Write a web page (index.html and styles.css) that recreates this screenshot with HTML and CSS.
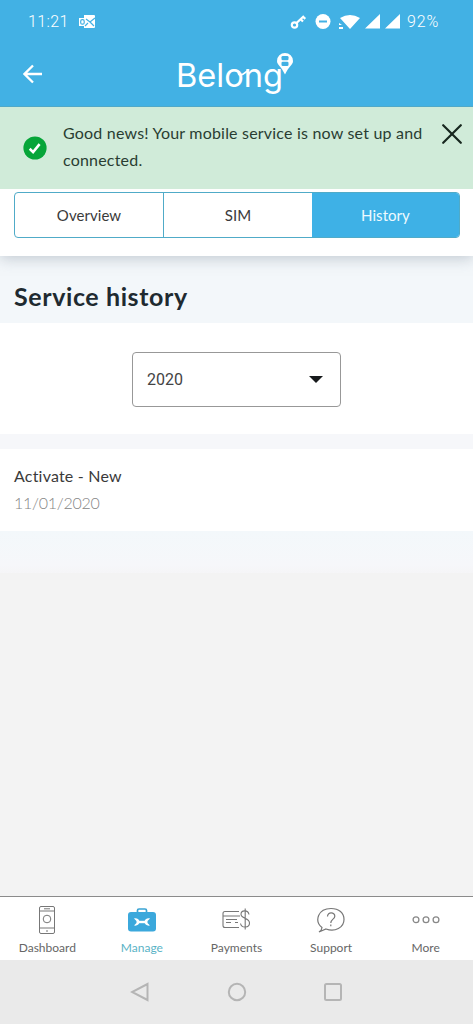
FILE: index.html
```html
<!DOCTYPE html>
<html lang="en">
<head>
<meta charset="utf-8">
<meta name="viewport" content="width=device-width, initial-scale=1">
<title>Service history</title>
<link rel="stylesheet" href="styles.css">
</head>
<body>
<div class="screen">
  <header class="top">
    <div class="status">
      <span class="clock">11:21</span>
      <svg class="mail" width="18" height="14" viewBox="0 0 18 14"><path fill="#fff" d="M6 0h10q1 0 1 1v11q0 1-1 1H6v-2H1V3h5z"/><path d="M8 4l4 3 5-4M12 7l4 4M7 11l3-3" fill="none" stroke="#42b1e4" stroke-width="1.2"/><rect x="2.700" y="4.700" width="3.500" height="4.500" rx="1.500" fill="none" stroke="#42b1e4" stroke-width="1.200"/></svg>
      <svg class="indicators" width="112" height="18" viewBox="0 0 112 18">
        <g fill="none" stroke="#fff" stroke-width="2.200"><circle cx="4.500" cy="12" r="2.700"/><path d="M6.500 10L14 3M10.500 6l2.500 2.500M13 3.700l2.300 2.200"/></g>
        <circle cx="33" cy="8.500" r="7.500" fill="#fff"/><path d="M29 8.500h8" stroke="#42b1e4" stroke-width="2"/>
        <path fill="#fff" d="M50 5Q60-1 70 5L60 16zM49 10l3 2h-3zM49 14h4v2h-4zM75 15.500L90 1v14.500zM95 15.500L110 1v14.500z"/>
      </svg>
      <span class="battery">92%</span>
    </div>
    <div class="brandbar">
      <svg class="back" width="20" height="20" viewBox="0 0 20 20"><path d="M19 10H2M10 1.500L1.500 10l8.500 8.500" fill="none" stroke="#fff" stroke-width="2.300"/></svg>
      <svg class="logo" width="120" height="48" viewBox="0 0 120 48">
        <text class="wordmark" x="-2" y="37" textLength="107" lengthAdjust="spacingAndGlyphs">Belong</text>
        <path d="M61 21q-1.500 4 1.500 4c3 0 5-3 8-5" fill="none" stroke="#fff" stroke-width="1.800"/>
        <path fill="#fff" d="M107 3a8 8 0 0 1 8 8c0 4-4 5-8 13.500-4-8.500-8-9.500-8-13.500a8 8 0 0 1 8-8z"/>
        <rect x="103.500" y="6" width="7" height="4.200" rx="1.300" fill="#42b1e4"/><rect x="103.500" y="11.800" width="7" height="4.200" rx="1.300" fill="#42b1e4"/>
      </svg>
    </div>
  </header>

  <section class="notice">
    <svg class="tick" width="24" height="24" viewBox="0 0 24 24"><circle cx="12" cy="12" r="11.600" fill="#06a539"/><path d="M6.700 12.800l3.400 3.300 6.500-7.900" fill="none" stroke="#fff" stroke-width="2.600"/></svg>
    <p class="message"><span class="line-one">Good news! Your mobile service is now set up and</span><br>connected.</p>
    <svg class="close" width="20" height="20" viewBox="0 0 20 20"><path d="M1.200 1.200l17.600 17.600M18.800 1.200L1.200 18.800" stroke="#17271f" stroke-width="2.200" stroke-linecap="round"/></svg>
  </section>

  <nav class="tabs">
    <div class="segments">
      <span class="segment">Overview</span>
      <span class="segment sim">SIM</span>
      <span class="segment selected">History</span>
    </div>
  </nav>

  <main class="content">
    <h1 class="title">Service history</h1>
    <div class="filter">
      <div class="select"><span>2020</span><svg width="14" height="7" viewBox="0 0 14 7"><path d="M0 0h14L7 7z" fill="#171a1c"/></svg></div>
    </div>
    <article class="entry">
      <div class="entry-name">Activate - New</div>
      <div class="entry-date">11/01/2020</div>
    </article>
    <div class="tail"></div>
  </main>

  <nav class="bottom">
    <div class="item"><svg class="icon" width="30" height="30" viewBox="0 0 30 30"><g fill="none" stroke="#777" stroke-width="1"><rect x="7.500" y="1.500" width="15" height="27" rx="1.500"/><path d="M7.500 6h15M7.500 23h15M12 3.800h6M15 25v2"/><circle cx="15" cy="14" r="3.800"/></g></svg><span class="label">Dashboard</span></div>
    <div class="item active"><svg class="icon" width="30" height="30" viewBox="0 0 30 30"><path d="M10.500 7V5.500q0-1.500 1.500-1.500h6q1.500 0 1.500 1.500V7" fill="none" stroke="#3aa4d4" stroke-width="1.700"/><rect x="1" y="7" width="28" height="19.500" rx="3" fill="#3ba8dc"/><path d="M10 17h10" stroke="#fff" stroke-width="2.400"/><path d="M7 13.500c3-.7 5.500 1.300 5.500 3.500s-2.500 4.200-5.500 3.500l2.500-2.500v-2zM23 13.500c-3-.7-5.500 1.300-5.500 3.500s2.500 4.200 5.500 3.500l-2.500-2.500v-2z" fill="#fff"/></svg><span class="label">Manage</span></div>
    <div class="item"><svg class="icon" width="30" height="30" viewBox="0 0 30 30"><g fill="none" stroke="#777" stroke-width="1.100"><path d="M18 6.500H4Q2 6.500 2 8.500v12q0 2 2 2h14M2 11h17M5 14.500h11M5 17.500h5M14 17.500h3M28 9.500c-1-5-8-4.500-8-.2 0 4.700 8.500 3 8.500 8.700 0 5-8 5.500-9 .5M24.200 3.500v21"/></g></svg><span class="label">Payments</span></div>
    <div class="item"><svg class="icon" width="30" height="30" viewBox="0 0 30 30"><g fill="none" stroke="#777" stroke-width="1.200"><path d="M6 22.500C-2 16 2 3.500 15 3.500c8 0 13 4.500 13 11 0 8-9 13-18 9.500L3 27q3-2 3-4.500z"/><path d="M11.500 11.500c0-5 7.500-4.500 7.300-.2 0 3-4 2.800-4 6.700M14.800 19.500v1.700"/></g></svg><span class="label">Support</span></div>
    <div class="item"><svg class="icon" width="30" height="30" viewBox="0 0 30 30"><g fill="none" stroke="#888" stroke-width="1.300"><circle cx="5" cy="14.700" r="2.900"/><circle cx="15" cy="14.700" r="2.900"/><circle cx="25" cy="14.700" r="2.900"/></g></svg><span class="label">More</span></div>
  </nav>
  <footer class="system">
    <svg width="20" height="20" viewBox="0 0 20 20"><path d="M17.500 2v16L2 10z"/></svg>
    <svg width="20" height="20" viewBox="0 0 20 20"><circle cx="10" cy="10" r="8.200"/></svg>
    <svg width="20" height="20" viewBox="0 0 20 20"><rect x="2" y="2" width="16" height="16" rx="1.500"/></svg>
  </footer>
</div>
</body>
</html>
```
FILE: styles.css
```css
* { box-sizing: border-box; }
body { margin: 0; background: #f3f3f3; color: #3a3a3a; font-family: Lato, "Open Sans", sans-serif; font-size: 16px; }
svg { display: block; flex: none; }
.screen { display: flex; flex-direction: column; height: 1024px; overflow: hidden; }
.top { height: 107px; flex: none; background: #42b1e4; border-bottom: 1px solid #50a9c8; color: #fff; }
.status { display: flex; align-items: center; height: 43px; padding: 0 31px 0 28px; font-family: Roboto, sans-serif; font-weight: 300; font-size: 16px; }
.clock { width: 50px; letter-spacing: .4px; }
.indicators { margin-left: auto; }
.battery { margin-left: 5px; width: 35px; letter-spacing: .9px; }
.brandbar { display: flex; align-items: flex-start; padding: 7px 0 0 23px; }
.back { margin-top: 14px; }
.logo { margin-left: 135px; overflow: visible; }
.wordmark { font-family: Inter, sans-serif; font-size: 33px; font-weight: 400; fill: #fff; }
.notice { display: flex; align-items: flex-start; height: 82px; flex: none; background: #d0ebd9; padding: 0 11px 0 23px; color: #293d32; }
.tick { margin-top: 29px; }
.message { margin: 12px 0 0 16px; width: 379px; line-height: 27px; font-size: 16px; letter-spacing: .2px; white-space: nowrap; }
.close { margin-top: 17px; }
.tabs { height: 67px; flex: none; padding: 3px 13px 0 14px; background: #fff; box-shadow: 0 2px 14px #8b98a580; clip-path: inset(0 0 -20px); z-index: 1; }
.segments { display: grid; grid-template-columns: 149px 148px 1fr; height: 46px; border: 1px solid #50abc8; border-radius: 4px; overflow: hidden; }
.segment { display: flex; align-items: center; justify-content: center; border-right: 1px solid #50abc8; font-size: 15px; letter-spacing: .05px; }
.segment.sim { border-right: 0; }
.segment.selected { background: #3eb1e6; color: #eefaff; border: 0; }
.content { flex: 1; background: #f3f3f3; }
.title { display: flex; align-items: center; height: 67px; margin: 0; padding: 13px 14px 0; background: #f3f7fa; font-size: 25px; font-weight: 700; letter-spacing: .6px; color: #202a30; }
.filter { display: flex; justify-content: center; height: 111px; padding-top: 29px; background: #fff; }
.select { display: flex; align-items: center; justify-content: space-between; width: 209px; height: 55px; padding: 0 17px 0 14px; border: 1px solid #989898; border-radius: 4px; font-family: Roboto, sans-serif; font-size: 16px; color: #444; }
.entry { height: 97px; padding: 13px 14px 0; border-top: 15px solid #f6f7fa; background: #fff; font-size: 16px; line-height: 27px; }
.entry-name { letter-spacing: .2px; }
.entry-date { color: #858585; font-weight: 300; letter-spacing: -.25px; }
.tail { height: 42px; background: linear-gradient(#f3f8fb, #f6f7fa 80%, #f5f5f7); }
.bottom { display: grid; grid-template-columns: repeat(5, 1fr); height: 64px; flex: none; background: #fff; border-top: 1px solid #8b8b8b; }
.item { display: flex; flex-direction: column; align-items: center; padding-top: 8px; color: #666; }
.label { margin-top: 5px; font-size: 12px; line-height: 16px; }
.active { color: #5ab3c6; }
.system { display: flex; align-items: center; height: 64px; flex: none; padding-left: 130px; gap: 76.5px; background: #eaeaea; }
.system svg { fill: none; stroke: #b5b5b5; stroke-width: 2; }
```
